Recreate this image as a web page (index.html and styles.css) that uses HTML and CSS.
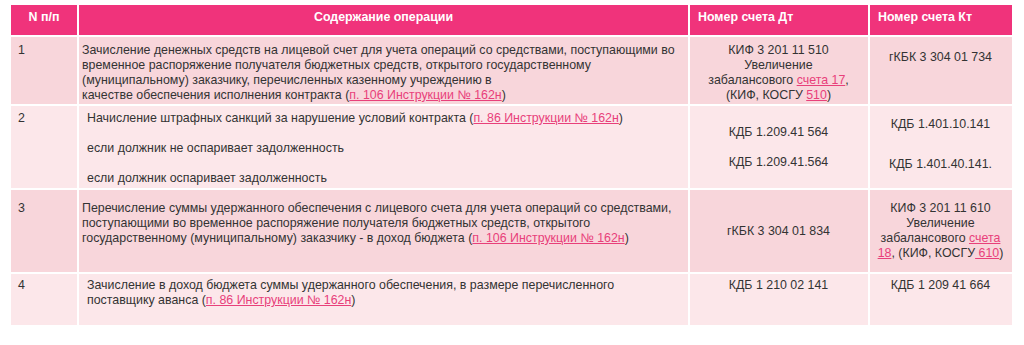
FILE: index.html
```html
<!DOCTYPE html>
<html lang="ru">
<head>
<meta charset="utf-8">
<title>Операции</title>
<link rel="stylesheet" href="styles.css">
</head>
<body>
<table class="ops">
  <colgroup>
    <col class="c-num">
    <col class="c-text">
    <col class="c-dt">
    <col class="c-kt">
  </colgroup>
  <thead>
    <tr>
      <th class="h-center">N п/п</th>
      <th class="h-center">Содержание операции</th>
      <th>Номер счета Дт</th>
      <th>Номер счета Кт</th>
    </tr>
  </thead>
  <tbody>
    <tr class="odd r1">
      <td class="num">1</td>
      <td class="txt">Зачисление денежных средств на лицевой счет для учета операций со средствами, поступающими во<br>временное распоряжение получателя бюджетных средств, открытого государственному<br>(муниципальному) заказчику, перечисленных казенному учреждению в<br>качестве обеспечения исполнения контракта (<a href="#">п. 106 Инструкции № 162н</a>)</td>
      <td class="acc">КИФ 3 201 11 510<br>Увеличение<br>забалансового <a href="#">счета 17</a>,<br>(КИФ, КОСГУ <a href="#">510</a>)</td>
      <td class="acc kt1">гКБК 3 304 01 734</td>
    </tr>
    <tr class="even r2">
      <td class="num">2</td>
      <td class="txt indent">Начисление штрафных санкций за нарушение условий контракта (<a href="#">п. 86 Инструкции № 162н</a>)<br><br>если должник не оспаривает задолженность<br><br>если должник оспаривает задолженность</td>
      <td class="acc mid">КДБ 1.209.41 564<br><br>КДБ 1.209.41.564</td>
      <td class="acc kt2"><div>КДБ 1.401.10.141</div><div class="gap">КДБ 1.401.40.141.</div></td>
    </tr>
    <tr class="odd r3">
      <td class="num">3</td>
      <td class="txt">Перечисление суммы удержанного обеспечения с лицевого счета для учета операций со средствами,<br>поступающими во временное распоряжение получателя бюджетных средств, открытого<br>государственному (муниципальному) заказчику - в доход бюджета (<a href="#">п. 106 Инструкции № 162н</a>)</td>
      <td class="acc mid">гКБК 3 304 01 834</td>
      <td class="acc mid">КИФ 3 201 11 610<br>Увеличение<br>забалансового <a href="#">счета</a><br><a href="#">18</a>, (КИФ, КОСГУ<a href="#"> 610</a>)</td>
    </tr>
    <tr class="even r4">
      <td class="num">4</td>
      <td class="txt indent">Зачисление в доход бюджета суммы удержанного обеспечения, в размере перечисленного<br>поставщику аванса (<a href="#">п. 86 Инструкции № 162н</a>)</td>
      <td class="acc">КДБ 1 210 02 141</td>
      <td class="acc">КДБ 1 209 41 664</td>
    </tr>
  </tbody>
</table>
</body>
</html>
```

FILE: styles.css
```css
html, body {
  margin: 0;
  padding: 0;
  background: #ffffff;
}

body {
  padding: 3px 0 0 9px;
  font-family: "Liberation Sans", Arial, sans-serif;
  font-size: 12.4px;
  line-height: 15px;
  color: #333333;
}

.ops {
  border-collapse: separate;
  border-spacing: 2px;
  table-layout: fixed;
  width: 1005px;
}

.c-num { width: 66px; }
.c-text { width: 609px; }
.c-dt { width: 178px; }
.c-kt { width: 142px; }

th {
  background: #f0337b;
  color: #ffffff;
  font-weight: bold;
  font-size: 12.4px;
  text-align: left;
  height: 30px;
  box-sizing: border-box;
  padding: 0 8px 5px 8px;
  vertical-align: middle;
}

th.h-center {
  text-align: center;
}

td {
  vertical-align: top;
  padding: 5px 4px 0 3px;
}

tr.odd td { background: #f8d6db; }
tr.even td { background: #fce7ea; }

tr.r1 td { height: 67px; box-sizing: border-box; padding-top: 6px; }
tr.r2 td { height: 82px; box-sizing: border-box; }
tr.r3 td { height: 82px; box-sizing: border-box; padding-top: 11px; }
tr.r4 td { height: 51px; box-sizing: border-box; padding-top: 4px; }

td.num {
  padding-left: 7px;
}

td.indent {
  padding-left: 8px;
}

td.acc {
  text-align: center;
}

tr td.mid {
  vertical-align: middle;
  padding-top: 0;
}

tr td.kt1 {
  padding-top: 13px;
}

tr td.kt2 {
  padding-top: 11px;
}

td.kt2 .gap {
  margin-top: 25px;
}

a {
  color: #e8407a;
  text-decoration: underline;
}
```
